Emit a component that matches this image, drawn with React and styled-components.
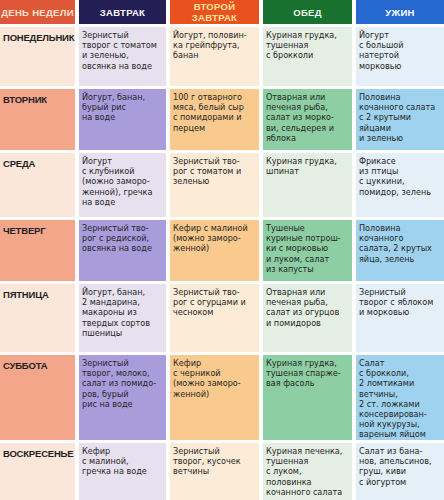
import styled, { createGlobalStyle } from "styled-components";

const GlobalStyle = createGlobalStyle`
  html, body {
    margin: 0;
    padding: 0;
    background: #ffffff;
  }
  body {
    font-family: "Liberation Sans", Arial, sans-serif;
  }
`;

// light / strong tones per column
const palette = {
  day: { light: "#fbe6da", strong: "#f4a68b" },
  breakfast: { light: "#e7e0ef", strong: "#a89cdb" },
  second: { light: "#fcebd7", strong: "#f9c98d" },
  lunch: { light: "#e5eee2", strong: "#8dcea3" },
  dinner: { light: "#e4eff8", strong: "#9ed2ee" },
};

const headers = [
  { key: "day", title: ["ДЕНЬ НЕДЕЛИ"], bg: "#df5739", color: "#fde3cf" },
  { key: "breakfast", title: ["ЗАВТРАК"], bg: "#231e54", color: "#ffffff" },
  { key: "second", title: ["ВТОРОЙ", "ЗАВТРАК"], bg: "#e9511f", color: "#ffe4a0" },
  { key: "lunch", title: ["ОБЕД"], bg: "#18712f", color: "#f2f7ee" },
  { key: "dinner", title: ["УЖИН"], bg: "#2568cf", color: "#ffffff" },
];

const week = [
  {
    day: "ПОНЕДЕЛЬНИК",
    strong: false,
    breakfast: ["Зернистый", "творог с томатом", "и зеленью,", "овсянка на воде"],
    second: ["Йогурт, половин-", "ка грейпфрута,", "банан"],
    lunch: ["Куриная грудка,", "тушенная", "с брокколи"],
    dinner: ["Йогурт", "с большой", "натертой", "морковью"],
  },
  {
    day: "ВТОРНИК",
    strong: true,
    breakfast: ["Йогурт, банан,", "бурый рис", "на воде"],
    second: ["100 г отварного", "мяса, белый сыр", "с помидорами и", "перцем"],
    lunch: ["Отварная или", "печеная рыба,", "салат из морко-", "ви, сельдерея и", "яблока"],
    dinner: ["Половина", "кочанного салата", "с 2 крутыми", "яйцами", "и зеленью"],
  },
  {
    day: "СРЕДА",
    strong: false,
    breakfast: ["Йогурт", "с клубникой", "(можно заморо-", "женной), гречка", "на воде"],
    second: ["Зернистый тво-", "рог с томатом и", "зеленью"],
    lunch: ["Куриная грудка,", "шпинат"],
    dinner: ["Фрикасе", "из птицы", "с цуккини,", "помидор, зелень"],
  },
  {
    day: "ЧЕТВЕРГ",
    strong: true,
    breakfast: ["Зернистый тво-", "рог с редиской,", "овсянка на воде"],
    second: ["Кефир с малиной", "(можно заморо-", "женной)"],
    lunch: ["Тушеные", "куриные потрош-", "ки с морковью", "и луком, салат", "из капусты"],
    dinner: ["Половина", "кочанного", "салата, 2 крутых", "яйца, зелень"],
  },
  {
    day: "ПЯТНИЦА",
    strong: false,
    breakfast: ["Йогурт, банан,", "2 мандарина,", "макароны из", "твердых сортов", "пшеницы"],
    second: ["Зернистый тво-", "рог с огурцами и", "чесноком"],
    lunch: ["Отварная или", "печеная рыба,", "салат из огурцов", "и помидоров"],
    dinner: ["Зернистый", "творог с яблоком", "и морковью"],
  },
  {
    day: "СУББОТА",
    strong: true,
    breakfast: ["Зернистый", "творог, молоко,", "салат из помидо-", "ров, бурый", "рис на воде"],
    second: ["Кефир", "с черникой", "(можно заморо-", "женной)"],
    lunch: ["Куриная грудка,", "тушеная спарже-", "вая фасоль"],
    dinner: [
      "Салат",
      "с брокколи,",
      "2 ломтиками",
      "ветчины,",
      "2 ст. ложками",
      "консервирован-",
      "ной кукурузы,",
      "вареным яйцом",
    ],
  },
  {
    day: "ВОСКРЕСЕНЬЕ",
    strong: false,
    breakfast: ["Кефир", "с малиной,", "гречка на воде"],
    second: ["Зернистый", "творог, кусочек", "ветчины"],
    lunch: ["Куриная печенка,", "тушенная", "с луком,", "половинка", "кочанного салата"],
    dinner: ["Салат из бана-", "нов, апельсинов,", "груш, киви", "с йогуртом"],
  },
];

const meals = ["breakfast", "second", "lunch", "dinner"];

export default function App() {
  return (
    <>
      <GlobalStyle />
      <Table>
        {headers.map((h) => (
          <HeaderCell key={h.key} $bg={h.bg} $color={h.color}>
            {h.title.map((t) => (
              <span key={t}>{t}</span>
            ))}
          </HeaderCell>
        ))}
        {week.map((row) => (
          <Row key={row.day} row={row} />
        ))}
      </Table>
    </>
  );
}

function Row({ row }) {
  const tone = row.strong ? "strong" : "light";
  return (
    <>
      <DayCell $bg={palette.day[tone]}>{row.day}</DayCell>
      {meals.map((m) => (
        <MealCell key={m} $bg={palette[m][tone]}>
          {row[m].map((line, i) => (
            <Line key={i}>{line}</Line>
          ))}
        </MealCell>
      ))}
    </>
  );
}

const Table = styled.div`
  display: grid;
  grid-template-columns: 75px 87px 89px 89px 88px;
  grid-template-rows: 24px 59px 61px 64px 61px 68px 85px 57px;
  column-gap: 4px;
  row-gap: 3px;
  width: 444px;
  height: 500px;
  overflow: hidden;
  background: #ffffff;
`;

const HeaderCell = styled.div`
  display: flex;
  flex-direction: column;
  align-items: center;
  justify-content: center;
  background: ${(p) => p.$bg};
  color: ${(p) => p.$color};
  font-family: "Liberation Sans", Arial, sans-serif;
  font-weight: 700;
  font-size: 9.5px;
  line-height: 11px;
  letter-spacing: 0.3px;
  text-align: center;
`;

const DayCell = styled.div`
  background: ${(p) => p.$bg};
  padding: 5px 0 0 3px;
  font-weight: 700;
  font-size: 9.5px;
  line-height: 11px;
  color: #1f1f1f;
  white-space: nowrap;
  letter-spacing: -0.2px;
`;

const MealCell = styled.div`
  background: ${(p) => p.$bg};
  padding: 3px 0 0 3px;
  color: #262626;
  font-family: "DejaVu Sans Condensed", "Liberation Sans", sans-serif;
  font-size: 9px;
  line-height: 10.2px;
  white-space: nowrap;
  overflow: hidden;
`;

const Line = styled.div`
  display: block;
`;
